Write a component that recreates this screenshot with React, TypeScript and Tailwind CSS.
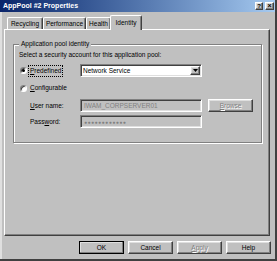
import React from 'react';

const raised =
  'bg-[#c0c0c0] border border-t-white border-l-white border-r-[#404040] border-b-[#404040] shadow-[inset_-1px_-1px_0_#808080,inset_1px_1px_0_#dfdfdf]';
const sunken =
  'border border-t-[#808080] border-l-[#808080] border-r-white border-b-white shadow-[inset_1px_1px_0_#404040,inset_-1px_-1px_0_#dfdfdf]';
const disabledText = 'text-[#808080] [text-shadow:1px_1px_0_#fff]';

const Radio = ({ checked }: { checked?: boolean }) => (
  <span className="w-[7px] h-[7px] rounded-full bg-white border border-t-[#808080] border-l-[#808080] border-r-white border-b-white shadow-[inset_1px_1px_0_#404040] flex items-center justify-center shrink-0">
    {checked && <span className="w-[3px] h-[3px] rounded-full bg-black" />}
  </span>
);

const App = () => {
  const tabs = [
    { label: 'Recycling', w: 'w-[36px]' },
    { label: 'Performance', w: 'w-[43px]' },
    { label: 'Health', w: 'w-[25px]' },
  ];

  return (
    <div className="w-[277px] h-[261px] bg-[#c0c0c0] flex flex-col overflow-hidden border-r-2 border-b-2 border-r-[#404040] border-b-[#404040] font-['Liberation_Sans',Arial,sans-serif] text-[6.5px] leading-[8px] text-black">
      {/* title bar */}
      <div className="h-[12px] shrink-0 bg-linear-to-r from-[#0a246a] to-[#a6caf0] flex items-center pl-[3px] pr-[1px]">
        <span className="text-white font-bold text-[7px] leading-[8px]">AppPool #2 Properties</span>
        <div className="ml-auto flex gap-[2px]">
          <span className={`${raised} w-[8px] h-[8px] flex items-center justify-center font-bold text-[6px] leading-[6px]`}>?</span>
          <span className={`${raised} w-[9px] h-[8px] flex items-center justify-center font-bold text-[7px] leading-[6px]`}>×</span>
        </div>
      </div>

      <div className="flex-1 flex flex-col border-l-2 border-l-[#dfdfdf]">
        {/* tabs */}
        <div className="mt-[3px] h-[15px] shrink-0 flex items-end pl-[3px] ml-[2px] relative z-10">
          {tabs.map((t) => (
            <div
              key={t.label}
              className={`${t.w} h-[12px] mb-[1px] flex items-center justify-center border-t border-l border-r border-t-white border-l-white border-r-[#404040] rounded-t-[2px] shadow-[inset_-1px_0_0_#808080]`}
            >
              {t.label}
            </div>
          ))}
          <div className="w-[32px] h-[15px] -ml-[1px] flex items-start pt-[3px] justify-center bg-[#c0c0c0] border-t border-l border-r border-t-white border-l-white border-r-[#404040] rounded-t-[2px] shadow-[inset_-1px_0_0_#808080]">
            Identity
          </div>
        </div>

        {/* panel */}
        <div className="-mt-[1px] ml-[2px] w-[266px] flex-1 border border-t-white border-l-white border-r-[#404040] border-b-[#404040] shadow-[inset_-1px_-1px_0_#808080] pt-[14px] pl-[8px]">
          <div className="relative w-[249px] h-[99px] border border-[#808080] shadow-[inset_1px_1px_0_#fff,1px_1px_0_#fff] pt-[6px] pl-[5px]">
            <span className="absolute -top-[5px] left-[5px] px-[2px] bg-[#c0c0c0]">Application pool identity</span>

            <div className="h-[8px]">Select a security account for this application pool:</div>

            <div className="mt-[5px] h-[13px] flex items-center">
              <div className="w-[61px] flex items-center pl-[1px]">
                <Radio checked />
                <span className="ml-[1px] px-[1px] border border-dotted border-black leading-[10px]">
                  <u>P</u>redefined
                </span>
              </div>
              <div className={`w-[122px] h-[13px] bg-white ${sunken} flex items-center pl-[2px]`}>
                <span>Network Service</span>
                <span className={`ml-auto mr-[1px] w-[10px] h-[9px] ${raised} flex items-center justify-center`}>
                  <svg width="5" height="3" viewBox="0 0 5 3">
                    <path d="M0 0h5L2.5 3z" fill="#000" />
                  </svg>
                </span>
              </div>
            </div>

            <div className="mt-[5px] h-[12px] flex items-center pl-[1px]">
              <Radio />
              <span className="ml-[3px]">
                <u>C</u>onfigurable
              </span>
            </div>

            <div className="mt-[5px] h-[13px] flex items-center">
              <div className="w-[61px] pl-[11px]">
                <u>U</u>ser name:
              </div>
              <div className={`w-[122px] h-[13px] ${sunken} flex items-center pl-[3px] text-[#808080]`}>
                IWAM_CORPSERVER01
              </div>
              <div className={`ml-[6px] w-[45px] h-[13px] ${raised} flex items-center justify-center ${disabledText}`}>
                <span>
                  <u>B</u>rowse
                </span>
              </div>
            </div>

            <div className="mt-[3px] h-[13px] flex items-center">
              <div className="w-[61px] pl-[11px]">
                Pass<u>w</u>ord:
              </div>
              <div className={`w-[122px] h-[13px] ${sunken} flex items-center pl-[3px] text-[#808080] text-[5px] tracking-[0.5px]`}>
                ●●●●●●●●●●●●
              </div>
            </div>
          </div>
        </div>

        {/* buttons */}
        <div className="h-[13px] shrink-0 mt-[5px] mb-[5px] flex justify-end gap-[4px] pr-[4px]">
          <div className={`w-[45px] h-[13px] ${raised} outline outline-1 outline-black -outline-offset-1 flex items-center justify-center`}>OK</div>
          <div className={`w-[45px] h-[13px] ${raised} flex items-center justify-center`}>Cancel</div>
          <div className={`w-[45px] h-[13px] ${raised} flex items-center justify-center ${disabledText}`}>
            <span>
              <u>A</u>pply
            </span>
          </div>
          <div className={`w-[45px] h-[13px] ${raised} flex items-center justify-center`}>Help</div>
        </div>
      </div>
    </div>
  );
};

export default App;
